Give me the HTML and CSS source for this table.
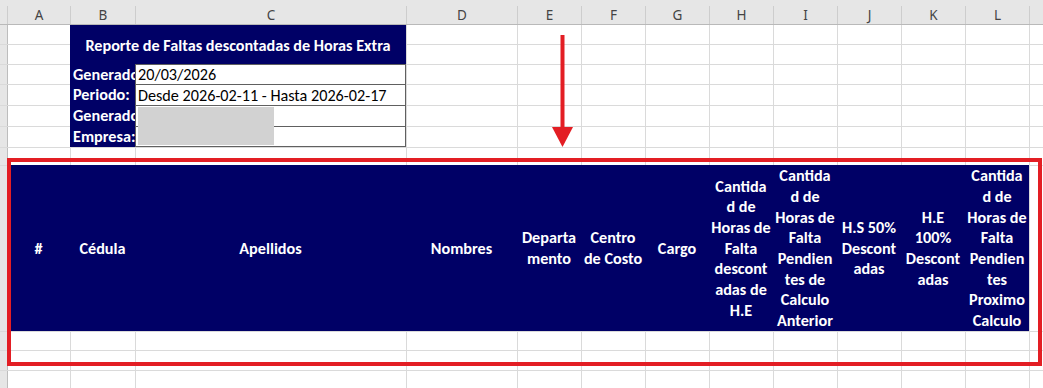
FILE: index.html
```html
<!DOCTYPE html>
<html lang="es">
<head>
<meta charset="utf-8">
<title>Reporte de Faltas descontadas de Horas Extra</title>
<link rel="stylesheet" href="styles.css">
</head>
<body>
<div class="sheet">
  <div class="hdrbg"></div>
  <div class="rhbg"></div>

  <div class="ch c2">A</div>
  <div class="ch c3">B</div>
  <div class="ch c4">C</div>
  <div class="ch c5">D</div>
  <div class="ch c6">E</div>
  <div class="ch c7">F</div>
  <div class="ch c8">G</div>
  <div class="ch c9">H</div>
  <div class="ch c10">I</div>
  <div class="ch c11">J</div>
  <div class="ch c12">K</div>
  <div class="ch c13">L</div>
  <div class="ch c14"></div>

  <div class="vl c2"></div>
  <div class="vl c3"></div>
  <div class="vl c4"></div>
  <div class="vl c5"></div>
  <div class="vl c6"></div>
  <div class="vl c7"></div>
  <div class="vl c8"></div>
  <div class="vl c9"></div>
  <div class="vl c10"></div>
  <div class="vl c11"></div>
  <div class="vl c12"></div>
  <div class="vl c13"></div>
  <div class="vl c14"></div>

  <div class="hl r3"></div>
  <div class="hl r4"></div>
  <div class="hl r5"></div>
  <div class="hl r6"></div>
  <div class="hl r7"></div>
  <div class="hl r8"></div>
  <div class="hl r9"></div>
  <div class="hl r10"></div>
  <div class="hl r11"></div>
  <div class="hl r12"></div>

  <div class="title">Reporte de Faltas descontadas de Horas Extra</div>

  <div class="label r4">Generado:</div>
  <div class="label r5">Periodo:</div>
  <div class="label r6">Generado por:</div>
  <div class="label r7">Empresa:</div>

  <div class="value r4">20/03/2026</div>
  <div class="value r5">Desde 2026-02-11 - Hasta 2026-02-17</div>
  <div class="value r6"><span class="sliver"></span></div>
  <div class="value r7 last"><span class="sliver dark"></span></div>

  <div class="th c2">#</div>
  <div class="th c3">Cédula</div>
  <div class="th c4">Apellidos</div>
  <div class="th c5">Nombres</div>
  <div class="th c6">Departa<br>mento</div>
  <div class="th c7">Centro<br>de Costo</div>
  <div class="th c8">Cargo</div>
  <div class="th c9">Cantida<br>d de<br>Horas de<br>Falta<br>descont<br>adas de<br>H.E</div>
  <div class="th c10">Cantida<br>d de<br>Horas de<br>Falta<br>Pendien<br>tes de<br>Calculo<br>Anterior</div>
  <div class="th c11">H.S 50%<br>Descont<br>adas</div>
  <div class="th c12">H.E<br>100%<br>Descont<br>adas</div>
  <div class="th c13">Cantida<br>d de<br>Horas de<br>Falta<br>Pendien<br>tes<br>Proximo<br>Calculo</div>

  <div class="redact"></div>
  <div class="highlight"></div>
  <svg class="arrow" width="22" height="112" viewBox="0 0 22 112" aria-hidden="true">
    <rect x="8.5" y="0" width="4" height="94" fill="#e31e24"/>
    <polygon points="0,92 21,92 10.5,112" fill="#e31e24"/>
  </svg>
</div>
</body>
</html>
```

FILE: styles.css
```css
* { box-sizing: border-box; }

html, body {
  margin: 0;
  padding: 0;
  background: #ffffff;
}

body {
  font-family: Carlito, Calibri, Lato, "Liberation Sans", sans-serif;
  width: 1043px;
  height: 388px;
  overflow: hidden;
}

.sheet {
  position: relative;
  display: grid;
  width: 1043px;
  height: 388px;
  grid-template-columns: 7px 63px 65px 271px 111px 64px 64px 64px 64px 64px 64px 64px 64px 1fr;
  grid-template-rows: 25px 19px 20px 20px 21px 21px 21px 18px 166px 19px 20px 1fr;
}

/* column placement */
.c2 { grid-column: 2; }
.c3 { grid-column: 3; }
.c4 { grid-column: 4; }
.c5 { grid-column: 5; }
.c6 { grid-column: 6; }
.c7 { grid-column: 7; }
.c8 { grid-column: 8; }
.c9 { grid-column: 9; }
.c10 { grid-column: 10; }
.c11 { grid-column: 11; }
.c12 { grid-column: 12; }
.c13 { grid-column: 13; }
.c14 { grid-column: 14; }

/* row placement */
.r3 { grid-row: 3; }
.r4 { grid-row: 4; }
.r5 { grid-row: 5; }
.r6 { grid-row: 6; }
.r7 { grid-row: 7; }
.r8 { grid-row: 8; }
.r9 { grid-row: 9; }
.r10 { grid-row: 10; }
.r11 { grid-row: 11; }
.r12 { grid-row: 12; }

/* column header band */
.hdrbg {
  grid-row: 1;
  grid-column: 1 / -1;
  background: #e6e6e6;
  border-bottom: 1px solid #b9b9b9;
}

.rhbg {
  grid-row: 2 / -1;
  grid-column: 1;
  background: #e6e6e6;
}

.ch {
  grid-row: 1;
  margin-top: 6px;
  margin-bottom: 1px;
  border-left: 1px solid #cdcdcd;
  display: flex;
  align-items: center;
  justify-content: center;
  font-family: "Noto Sans", "Liberation Sans", sans-serif;
  font-size: 13.5px;
  color: #444444;
}

/* gridlines */
.vl {
  grid-row: 2 / -1;
  border-left: 1px solid #dadada;
}
.vl.c2 { border-left-color: #bdbdbd; }

.hl {
  grid-column: 1 / -1;
  border-top: 1px solid #dadada;
}

/* report header block */
.title {
  grid-column: 3 / 5;
  grid-row: 2 / 4;
  background: #000066;
  color: #ffffff;
  font-weight: 700;
  font-size: 16.2px;
  display: flex;
  align-items: center;
  justify-content: center;
  padding-top: 2px;
}

.label {
  grid-column: 3;
  background: #000066;
  color: #ffffff;
  font-weight: 700;
  font-size: 16.2px;
  white-space: nowrap;
  overflow: hidden;
  padding-left: 3px;
  display: flex;
  align-items: center;
}

.value {
  grid-column: 4;
  background: #ffffff;
  border-top: 1px solid #606060;
  border-left: 1px solid #606060;
  border-right: 1px solid #606060;
  color: #000000;
  font-size: 16.2px;
  white-space: nowrap;
  overflow: hidden;
  padding-left: 2px;
  display: flex;
  align-items: center;
}
.value.last { border-bottom: 1px solid #606060; }

.sliver {
  display: block;
  width: 2px;
  height: 11px;
  background: #c55a2d;
  margin-left: 1px;
}
.sliver.dark { background: #3a3a3a; width: 1px; height: 8px; margin-top: 4px; }

/* table header */
.th {
  grid-row: 9;
  background: #000066;
  color: #ffffff;
  font-weight: 700;
  font-size: 16.2px;
  line-height: 20.7px;
  text-align: center;
  display: flex;
  align-items: center;
  justify-content: center;
  padding-top: 2px;
  white-space: nowrap;
}

/* overlays */
.redact {
  position: absolute;
  left: 138px;
  top: 107px;
  width: 136px;
  height: 38px;
  background: #d2d2d2;
}

.highlight {
  position: absolute;
  left: 7px;
  top: 158px;
  width: 1035px;
  height: 208px;
  border: 4px solid #e31e24;
}

.arrow {
  position: absolute;
  left: 552px;
  top: 35px;
}
```
